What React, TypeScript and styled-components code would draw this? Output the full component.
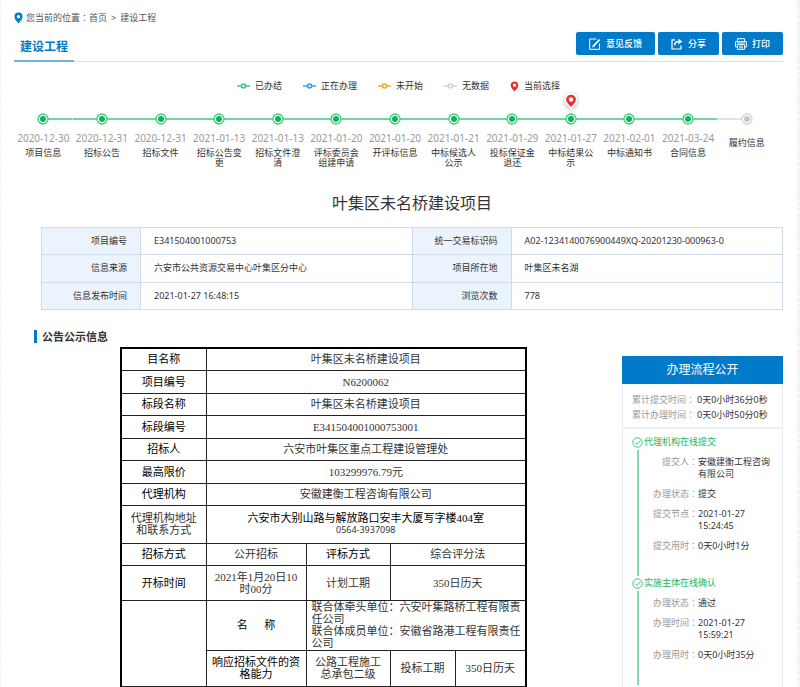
import React from "react";
import styled, { createGlobalStyle } from "styled-components";

const BLUE = "#007ac9";
const GREEN = "#12b95f";
const SANS = `"Noto Sans", "Noto Sans CJK SC", sans-serif`;
const SONG = `"Liberation Serif", "Noto Sans CJK SC", serif`;

const GlobalStyle = createGlobalStyle`
  *, *::before, *::after { box-sizing: border-box; }
  body {
    margin: 0;
    font: 9px/12px ${SANS};
    color: #333;
    background: repeating-linear-gradient(135deg, #f0f0f0 0 2px, #fafafa 2px 4px);
  }
  h1, h2, h3, p, ol, ul, dl, dd { margin: 0; padding: 0; list-style: none; }
`;

const Page = styled.div`
  margin: 0 3px 0 1px;
  padding: 12px 14px 0 13px;
  min-height: 100vh;
  background: #fff;
`;

const CenteredColon = styled.span`
  font-family: "Noto Sans CJK TC", sans-serif;
`;

const Breadcrumb = styled.nav`
  display: flex;
  align-items: center;
  gap: 3px;
  margin-bottom: 8px;
  color: #555;
`;

const Crumb = styled.a`
  color: inherit;
  text-decoration: none;
`;

const Separator = styled.span`
  margin: 0 4px;
`;

const TitleBar = styled.header`
  display: flex;
  justify-content: space-between;
  border-bottom: 1px solid #ddd;
`;

const TabTitle = styled.h2`
  align-self: flex-end;
  margin-bottom: -1px;
  padding: 0 6px;
  font-size: 12px;
  line-height: 26px;
  font-weight: 700;
  color: ${BLUE};
  border-bottom: 2px solid #6fb2dd;
`;

const Actions = styled.div`
  display: flex;
  gap: 3px;
  padding-bottom: 6px;
`;

const ActionButton = styled.button`
  display: flex;
  align-items: center;
  gap: 5px;
  height: 23px;
  padding: 0 13px;
  border: 0;
  border-radius: 2px;
  background: ${BLUE};
  color: #fff;
  font: 500 9px/12px ${SANS};
  cursor: pointer;
`;

const Legend = styled.ul`
  display: flex;
  justify-content: center;
  gap: 21px;
  margin-top: 18px;
`;

const LegendItem = styled.li`
  display: flex;
  align-items: center;
  gap: 5px;
`;

const Timeline = styled.ol`
  display: grid;
  grid-template-columns: repeat(13, 1fr);
  margin: 21px 7px 0 0;
`;

const Step = styled.li`
  text-align: center;
`;

const Rail = styled.div<{ $color: string }>`
  position: relative;
  display: flex;
  justify-content: center;
  height: 12px;
  background: linear-gradient(${(p) => p.$color}, ${(p) => p.$color}) no-repeat left 5px / 100% 2px;
  ${Step}:first-child & { background-position: right 5px; background-size: 50% 2px; }
  ${Step}:last-child & { background-size: 50% 2px; }
`;

const CurrentPin = styled.span`
  position: absolute;
  left: 50%;
  bottom: 15px;
  transform: translateX(-50%);
  display: flex;
  filter: drop-shadow(0 1px 2px rgba(0, 0, 0, 0.3));
`;

const StepDate = styled.time`
  display: block;
  margin-top: 7px;
  font-size: 10px;
  line-height: 12px;
  color: #999;
`;

const StepLabel = styled.div<{ $dated: boolean }>`
  margin-top: ${(p) => (p.$dated ? 4 : 13)}px;
  padding: 0 6px;
  line-height: 10px;
`;

const ProjectTitle = styled.h1`
  margin: 23px 0 12px 27px;
  text-align: center;
  font-size: 16px;
  line-height: 24px;
  font-weight: 400;
`;

const InfoTable = styled.table`
  width: calc(100% - 27px);
  height: 83px;
  margin-left: 27px;
  table-layout: fixed;
  border-collapse: collapse;
  th, td { border: 1px solid #cfdbe8; padding: 0 13px; font-weight: 400; }
  th { width: 99px; text-align: right; background: #ebf3fc; }
`;

const Content = styled.div`
  display: grid;
  grid-template-columns: 1fr 161px;
  column-gap: 9px;
  align-items: start;
  margin: 20px 0 0 20px;
`;

const SectionTitle = styled.h3`
  margin-bottom: 4px;
  padding-left: 5px;
  border-left: 3px solid ${BLUE};
  font-size: 11px;
  line-height: 13px;
  font-weight: 700;
`;

const NoticeTable = styled.table`
  width: 100%;
  max-width: 405px;
  margin: 0 auto;
  table-layout: fixed;
  border-collapse: collapse;
  border: 2px solid #000;
  border-bottom: 0;
  font-family: ${SONG};
  font-size: 11px;
  line-height: 12px;
  text-align: center;
`;

const Col = styled.col<{ $w: number }>`
  width: ${(p) => p.$w}px;
`;

const NoticeRow = styled.tr<{ $h: number }>`
  height: ${(p) => p.$h}px;
`;

const Label = styled.th<{ $soft?: boolean }>`
  padding: 0;
  border: 1px solid #222;
  font-weight: 400;
  color: ${(p) => (p.$soft ? "#333" : "#000")};
`;

const Value = styled.td<{ $left?: boolean }>`
  padding: ${(p) => (p.$left ? "0 4px 0 5px" : "0")};
  border: 1px solid #222;
  text-align: ${(p) => (p.$left ? "left" : "center")};
`;

const Address = styled.div`
  color: #000;
`;

const Phone = styled.div`
  font: 9px/12px ${SANS};
`;

const Panel = styled.aside`
  margin-top: 26px;
  align-self: stretch;
  border: 1px solid #e3ebf3;
  border-top: 0;
  border-bottom: 0;
`;

const PanelTitle = styled.h3`
  margin: 0 -1px;
  background: ${BLUE};
  color: #fff;
  text-align: center;
  font-size: 12px;
  line-height: 28px;
  font-weight: 400;
`;

const Pair = styled.div`
  display: flex;
  dt { flex: none; color: #999; text-align: right; }
  dd { color: #333; }
`;

const Totals = styled.dl`
  padding: 8px 8px 5px 9px;
  border-bottom: 2px solid #e9f0f6;
  line-height: 15px;
  ${Pair} { gap: 2px; }
`;

const Stages = styled.ol`
  padding: 7px 0 0 9px;
`;

const Stage = styled.li`
  padding-bottom: 25px;
  background: linear-gradient(#86dbae, #86dbae) no-repeat 5px 14px / 2px calc(100% - 15px);
`;

const StageTitle = styled.h4`
  display: flex;
  align-items: center;
  gap: 1px;
  margin: 0;
  font-size: 9px;
  line-height: 12px;
  font-weight: 400;
  color: ${GREEN};
`;

const StageDetails = styled.dl`
  display: flex;
  flex-direction: column;
  gap: 8px;
  margin-top: 8px;
  padding-right: 8px;
  ${Pair} dt { width: 66px; }
`;

const Colon = () => <CenteredColon lang="zh-TW">：</CenteredColon>;

const PinIcon = ({ color, w, h }: { color: string; w: number; h: number }) => (
  <svg width={w} height={h} viewBox="0 0 10 13" aria-hidden="true">
    <path fill={color} fillRule="evenodd" d="M5 .5A4.5 4.5 0 0 0 .5 5C.5 8 3 9.500 5 12.500C7 9.500 9.500 8 9.500 5A4.500 4.500 0 0 0 5 .5ZM5 3.100a1.900 1.900 0 1 1 0 3.800a1.900 1.900 0 0 1 0-3.800Z" />
  </svg>
);

const CurrentPinIcon = () => (
  <svg width="14" height="17" viewBox="0 0 14 17" aria-hidden="true">
    <path fill="#e83032" stroke="#fff" strokeWidth="1.500" d="M7 1A5.700 5.700 0 0 0 1.300 6.700C1.300 10.500 4.800 12 7 15.500C9.200 12 12.700 10.500 12.700 6.700A5.700 5.700 0 0 0 7 1Z" />
    <circle cx="7" cy="6.500" r="2.200" fill="#fff" />
  </svg>
);

const LineMark = ({ color }: { color: string }) => (
  <svg width="13" height="6" viewBox="0 0 13 6" aria-hidden="true">
    <path d="M0 3H13" stroke={color} strokeWidth="1.400" />
    <circle cx="6.500" cy="3" r="2" fill="#fff" stroke={color} strokeWidth="1.500" />
  </svg>
);

const Dot = ({ done }: { done: boolean }) => (
  <svg width="12" height="12" viewBox="0 0 12 12" aria-hidden="true">
    <circle cx="6" cy="6" r="5" fill="#fff" stroke={done ? "#3fcb80" : "#d2d2d2"} strokeWidth="1.300" />
    <circle cx="6" cy="6" r="3" fill={done ? "#08b850" : "#c4c4c4"} />
  </svg>
);

const CheckIcon = () => (
  <svg width="11" height="11" viewBox="0 0 11 11" fill="none" stroke="#3ac47b" aria-hidden="true">
    <circle cx="5.500" cy="5.500" r="4.700" fill="#fff" />
    <path d="M3 5.400L5 7.400L8.500 3.600" />
  </svg>
);

const EditIcon = () => (
  <svg width="12" height="12" viewBox="0 0 12 12" fill="none" stroke="#fff" aria-hidden="true">
    <path d="M7.500 1H.7V11.300H10.500V5.500" />
    <path d="M4.300 8.200L10.600 1.600" strokeWidth="1.800" />
    <path d="M3.400 9.200L4.300 7.200L5.400 8.300Z" fill="#fff" strokeWidth=".5" />
  </svg>
);

const ShareIcon = () => (
  <svg width="12" height="12" viewBox="0 0 12 12" fill="none" stroke="#fff" aria-hidden="true">
    <path d="M4 1.800H1V11H10V7.500" strokeWidth="1.200" />
    <path d="M3.700 7.300C3.700 4.500 5.300 3.500 7.600 3.500" strokeWidth="1.500" />
    <path d="M7.300 .8L11.300 3.600L7.300 6.400Z" fill="#fff" stroke="none" />
  </svg>
);

const PrintIcon = () => (
  <svg width="12" height="12" viewBox="0 0 12 12" fill="none" stroke="#fff" aria-hidden="true">
    <path d="M2.500 3.500V.7H9.500V3.500M2.500 9H.6V3.600H11.400V9H9.500" />
    <path d="M2.500 6.500H9.500V11.400H2.500ZM4 8.200H8M4 9.800H8M2 5H10" strokeWidth=".9" />
  </svg>
);

const legend = [
  ["已办结", "#2fc878"],
  ["正在办理", "#2d9cec"],
  ["未开始", "#f5a427"],
  ["无数据", "#cfcfcf"],
];

const steps: { date?: string; label: string; current?: boolean }[] = [
  { date: "2020-12-30", label: "项目信息" },
  { date: "2020-12-31", label: "招标公告" },
  { date: "2020-12-31", label: "招标文件" },
  { date: "2021-01-13", label: "招标公告变更" },
  { date: "2021-01-13", label: "招标文件澄清" },
  { date: "2021-01-20", label: "评标委员会组建申请" },
  { date: "2021-01-20", label: "开评标信息" },
  { date: "2021-01-21", label: "中标候选人公示" },
  { date: "2021-01-29", label: "投标保证金退还" },
  { date: "2021-01-27", label: "中标结果公示", current: true },
  { date: "2021-02-01", label: "中标通知书" },
  { date: "2021-03-24", label: "合同信息" },
  { label: "履约信息" },
];

const info = [
  ["项目编号", "E341504001000753", "统一交易标识码", "A02-1234140076900449XQ-20201230-000963-0"],
  ["信息来源", "六安市公共资源交易中心叶集区分中心", "项目所在地", "叶集区未名湖"],
  ["信息发布时间", "2021-01-27 16:48:15", "浏览次数", "778"],
];

const notice: [string, string, number][] = [
  ["目名称", "叶集区未名桥建设项目", 22],
  ["项目编号", "N6200062", 23],
  ["标段名称", "叶集区未名桥建设项目", 22],
  ["标段编号", "E341504001000753001", 23],
  ["招标人", "六安市叶集区重点工程建设管理处", 22],
  ["最高限价", "103299976.79元", 23],
  ["代理机构", "安徽建衡工程咨询有限公司", 22],
];

const stages = [
  {
    title: "代理机构在线提交",
    rows: [
      ["提交人", "安徽建衡工程咨询有限公司"],
      ["办理状态", "提交"],
      ["提交节点", "2021-01-27 15:24:45"],
      ["提交用时", "0天0小时1分"],
    ],
  },
  {
    title: "实施主体在线确认",
    rows: [
      ["办理状态", "通过"],
      ["办理时间", "2021-01-27 15:59:21"],
      ["办理用时", "0天0小时35分"],
    ],
  },
];

export default function App() {
  return (
    <>
      <GlobalStyle />
      <Page lang="zh-CN">
        <Breadcrumb>
          <PinIcon color={BLUE} w={9} h={12} />
          <span>
            您当前的位置<Colon /><Crumb href="#home">首页</Crumb><Separator>&gt;</Separator><Crumb href="#construction">建设工程</Crumb>
          </span>
        </Breadcrumb>

        <TitleBar>
          <TabTitle>建设工程</TabTitle>
          <Actions>
            <ActionButton type="button"><EditIcon />意见反馈</ActionButton>
            <ActionButton type="button"><ShareIcon />分享</ActionButton>
            <ActionButton type="button"><PrintIcon />打印</ActionButton>
          </Actions>
        </TitleBar>

        <Legend>
          {legend.map(([name, color]) => (
            <LegendItem key={name}><LineMark color={color} />{name}</LegendItem>
          ))}
          <LegendItem><PinIcon color="#e83032" w={9} h={11} />当前选择</LegendItem>
        </Legend>

        <Timeline>
          {steps.map((s) => (
            <Step key={s.label}>
              <Rail $color={s.date ? "#70d79e" : "#e2e2e2"}>
                <Dot done={!!s.date} />
                {s.current && <CurrentPin><CurrentPinIcon /></CurrentPin>}
              </Rail>
              {s.date && <StepDate>{s.date}</StepDate>}
              <StepLabel $dated={!!s.date}>{s.label}</StepLabel>
            </Step>
          ))}
        </Timeline>

        <ProjectTitle>叶集区未名桥建设项目</ProjectTitle>

        <InfoTable>
          <tbody>
            {info.map(([k1, v1, k2, v2]) => (
              <tr key={k1}>
                <th scope="row">{k1}</th>
                <td>{v1}</td>
                <th scope="row">{k2}</th>
                <td>{v2}</td>
              </tr>
            ))}
          </tbody>
        </InfoTable>

        <Content>
          <main>
            <SectionTitle>公告公示信息</SectionTitle>
            <NoticeTable>
              <colgroup>
                <Col $w={85} /><Col $w={100} /><Col $w={84} /><Col $w={65} /><Col $w={71} />
              </colgroup>
              <tbody>
                {notice.map(([k, v, h]) => (
                  <NoticeRow key={k} $h={h}>
                    <Label scope="row">{k}</Label>
                    <Value colSpan={4}>{v}</Value>
                  </NoticeRow>
                ))}
                <NoticeRow $h={38}>
                  <Label scope="row" $soft>代理机构地址<br />和联系方式</Label>
                  <Value colSpan={4}>
                    <Address>六安市大别山路与解放路口安丰大厦写字楼404室</Address>
                    <Phone>0564-3937098</Phone>
                  </Value>
                </NoticeRow>
                <NoticeRow $h={22}>
                  <Label scope="row">招标方式</Label>
                  <Value>公开招标</Value>
                  <Label scope="row">评标方式</Label>
                  <Value colSpan={2}>综合评分法</Value>
                </NoticeRow>
                <NoticeRow $h={35}>
                  <Label scope="row">开标时间</Label>
                  <Value>2021年1月20日10<br />时00分</Value>
                  <Label scope="row" $soft>计划工期</Label>
                  <Value colSpan={2}>350日历天</Value>
                </NoticeRow>
                <NoticeRow $h={50}>
                  <Value rowSpan={2} />
                  <Label scope="row">名&emsp;&ensp;称</Label>
                  <Value colSpan={3} $left>
                    <p>联合体牵头单位：六安叶集路桥工程有限责任公司</p>
                    <p>联合体成员单位：安徽省路港工程有限责任公司</p>
                  </Value>
                </NoticeRow>
                <NoticeRow $h={36}>
                  <Label scope="row">响应招标文件的资<br />格能力</Label>
                  <Value>公路工程施工<br />总承包二级</Value>
                  <Label scope="row" $soft>投标工期</Label>
                  <Value>350日历天</Value>
                </NoticeRow>
              </tbody>
            </NoticeTable>
          </main>

          <Panel>
            <PanelTitle>办理流程公开</PanelTitle>
            <Totals>
              <Pair><dt>累计提交时间<Colon /></dt><dd>0天0小时36分0秒</dd></Pair>
              <Pair><dt>累计办理时间<Colon /></dt><dd>0天0小时50分0秒</dd></Pair>
            </Totals>
            <Stages>
              {stages.map((stage) => (
                <Stage key={stage.title}>
                  <StageTitle><CheckIcon />{stage.title}</StageTitle>
                  <StageDetails>
                    {stage.rows.map(([k, v]) => (
                      <Pair key={k}><dt>{k}<Colon /></dt><dd>{v}</dd></Pair>
                    ))}
                  </StageDetails>
                </Stage>
              ))}
            </Stages>
          </Panel>
        </Content>
      </Page>
    </>
  );
}
